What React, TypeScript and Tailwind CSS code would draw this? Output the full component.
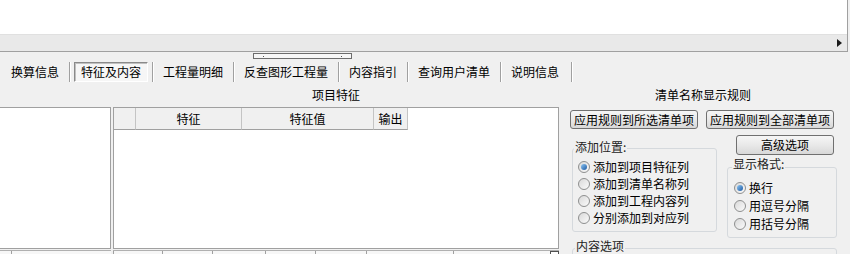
import React from 'react';

const tabs = ['换算信息', '特征及内容', '工程量明细', '反查图形工程量', '内容指引', '查询用户清单', '说明信息'];

function Sep() {
  return <div className="w-[2px] h-[20px] border-l border-[#a0a0a0] border-r border-r-white" />;
}

function Radio({ label, checked = false }: { label: string; checked?: boolean }) {
  return (
    <div className="flex items-center">
      <div className="w-[12px] h-[12px] rounded-full border border-[#8e8f8f] bg-linear-to-br from-[#d9d9d9] to-[#fbfbfb] flex items-center justify-center">
        {checked && <div className="w-[6px] h-[6px] rounded-full bg-linear-to-br from-[#8ec6f2] to-[#1b5aa3]" />}
      </div>
      <span className="ml-[3px]">{label}</span>
    </div>
  );
}

function Btn({ children, className = '' }: { children: React.ReactNode; className?: string }) {
  return (
    <div
      className={`flex items-center justify-center border border-[#707070] rounded-[3px] bg-linear-to-b from-[#f6f6f6] via-[#e9e9e9] to-[#d8d8d8] ${className}`}
    >
      {children}
    </div>
  );
}

export default function App() {
  return (
    <div className="w-[850px] h-[254px] overflow-hidden bg-[#f0f0f0] text-[12px] leading-[14px] text-black font-['Noto_Sans_CJK_SC','Noto_Sans',sans-serif]">
      {/* top list area + horizontal scroll strip */}
      <div className="w-[848px] border-r border-[#a0a0a0]">
        <div className="h-[34px] bg-white" />
        <div className="h-[18px] bg-[#e9e9e9] border-t border-[#e0e0e0] border-b border-b-[#a0a0a0] flex items-center justify-end pr-[5px]">
          <svg width="5" height="8" viewBox="0 0 5 8">
            <path d="M0 0 L5 4 L0 8 Z" fill="#1a1a1a" />
          </svg>
        </div>
      </div>

      {/* splitter handle */}
      <div className="h-[9px] pt-[1px]">
        <div className="ml-[253px] w-[99px] h-[6px] border border-[#6d6d6d] bg-[#f7f7f7] flex items-center justify-between px-[9px]">
          <div className="w-[1px] h-[1px] bg-[#555]" />
          <div className="w-[1px] h-[1px] bg-[#555]" />
        </div>
      </div>

      {/* tab bar */}
      <div className="h-[22px] flex items-center pl-[11px]">
        {tabs.map((t, i) => (
          <React.Fragment key={t}>
            {i === 1 ? (
              <div className="ml-[3px] mr-[4px] h-[20px] w-[74px] border border-[#8a8a8a] border-r-white border-b-white shadow-[inset_1px_1px_0_#c0c0c0] bg-[#f6f6f6] flex items-center justify-center">
                {t}
              </div>
            ) : (
              <span className={i === 0 ? '' : 'ml-[9px]'}>{t}</span>
            )}
            {i === 1 ? <Sep /> : <div className={i === tabs.length - 1 ? 'ml-[12px]' : 'ml-[10px]'}><Sep /></div>}
          </React.Fragment>
        ))}
      </div>

      {/* main content */}
      <div className="flex pt-[3px]">
        {/* left panel */}
        <div className="w-[111px] flex flex-col">
          <div className="h-[21px]" />
          <div className="h-[142px] bg-white border-t border-r border-b border-[#a0a0a0]" />
          <div className="h-[8px] mt-[1px] flex border-t border-[#b0b0b0] bg-[#f7f7f7]">
            <div className="w-[12px] border-r border-[#a0a0a0]" />
          </div>
        </div>

        {/* middle panel */}
        <div className="ml-[2px] w-[446px] flex flex-col">
          <div className="h-[21px] pt-[2px] text-center">项目特征</div>
          <div className="h-[142px] bg-white border border-[#a0a0a0]">
            <div className="flex h-[22px]">
              <div className="w-[22px] bg-[#f0f0f0] border-r border-b border-[#c4c4c4] border-b-[#a0a0a0]" />
              <div className="w-[106px] bg-[#f0f0f0] border-r border-b border-[#c4c4c4] border-b-[#a0a0a0] flex items-center justify-center">特征</div>
              <div className="w-[132px] bg-[#f0f0f0] border-r border-b border-[#c4c4c4] border-b-[#a0a0a0] flex items-center justify-center">特征值</div>
              <div className="w-[34px] bg-[#f0f0f0] border-r border-b border-[#c4c4c4] border-b-[#a0a0a0] flex items-center justify-center">输出</div>
            </div>
          </div>
          <div className="h-[8px] mt-[1px] flex border-t border-[#b0b0b0] bg-[#f7f7f7]">
            <div className="w-[50px] border-l border-r border-[#a0a0a0]" />
            <div className="w-[50px] border-r border-[#a0a0a0]" />
            <div className="w-[53px] border-r border-[#a0a0a0]" />
            <div className="w-[50px] border-r border-[#a0a0a0]" />
            <div className="w-[51px] border-r border-[#a0a0a0]" />
            <div className="w-[87px] border-r border-[#a0a0a0]" />
            <div className="flex-1" />
            <div className="w-[9px] border border-[#505050] bg-white" />
          </div>
        </div>

        {/* right panel */}
        <div className="ml-[10px] w-[268px] flex flex-col">
          <div className="h-[21px] pt-[2px] text-center">清单名称显示规则</div>
          <div className="flex mt-[3px]">
            <Btn className="ml-[1px] w-[128px] h-[19px]">应用规则到所选清单项</Btn>
            <Btn className="ml-[8px] w-[128px] h-[19px]">应用规则到全部清单项</Btn>
          </div>
          <div className="flex mt-[4px] h-[106px] items-start">
            <fieldset className="ml-[3px] mt-[7px] w-[146px] border border-[#d5d9dd] rounded-[3px] pl-[5px] pt-[2px] pb-[5px]">
              <legend className="ml-[-4px] px-[1px] pb-[2px] text-[#222]">添加位置:</legend>
              <div className="h-[17px] flex items-center"><Radio label="添加到项目特征列" checked /></div>
              <div className="h-[17px] flex items-center"><Radio label="添加到清单名称列" /></div>
              <div className="h-[17px] flex items-center"><Radio label="添加到工程内容列" /></div>
              <div className="h-[17px] flex items-center"><Radio label="分别添加到对应列" /></div>
            </fieldset>
            <div className="ml-[10px] w-[110px] flex flex-col">
              <Btn className="ml-[9px] mt-[2px] w-[98px] h-[20px]">高级选项</Btn>
              <fieldset className="mt-[2px] w-[110px] border border-[#d5d9dd] rounded-[3px] pl-[6px] pt-[2px] pb-[4px]">
                <legend className="ml-[-2px] px-[1px] pb-[6px] text-[#222]">显示格式:</legend>
                <div className="h-[18px] flex items-center"><Radio label="换行" checked /></div>
                <div className="h-[18px] flex items-center"><Radio label="用逗号分隔" /></div>
                <div className="h-[18px] flex items-center"><Radio label="用括号分隔" /></div>
              </fieldset>
            </div>
          </div>
          <fieldset className="ml-[3px] w-[265px] h-[30px] border border-[#d5d9dd] rounded-[3px] pl-[2px]">
            <legend className="px-[1px] pb-[4px] text-[#222]">内容选项</legend>
          </fieldset>
        </div>
      </div>
    </div>
  );
}
